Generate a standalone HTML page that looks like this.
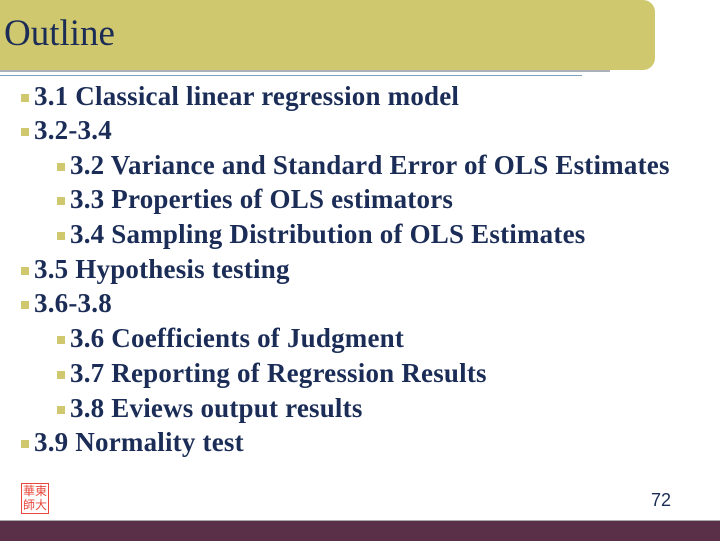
<!DOCTYPE html>
<html><head><style>
body{margin:0;width:720px;height:540px;position:relative;overflow:hidden;background:#fff;font-family:"Liberation Serif",serif;}
.hdr{position:absolute;left:0;top:0;width:655px;height:70px;background:#cfc86e;border-radius:0 12px 12px 0;}
.title{position:absolute;left:4px;top:12px;font-size:37px;color:#1b2d57;}
.l1{position:absolute;left:0;top:70px;width:610px;height:2px;background:#aab0b8;}
.l2{position:absolute;left:0;top:75px;width:582px;height:1px;background:#7fa0b8;}
.it{position:absolute;font-weight:bold;font-size:27px;color:#1b2d57;white-space:nowrap;line-height:28px;letter-spacing:0.2px;}
.it::before{content:"";position:absolute;left:-13px;top:12px;width:8px;height:8px;background:#cfc86e;}
.foot{position:absolute;left:0;top:520px;width:720px;height:20px;background:#5a2f48;border-top:1px solid #aaa;}
.num{position:absolute;left:651px;top:490px;font-family:"Liberation Sans",sans-serif;font-size:18px;color:#1b2d57;}
.seal{position:absolute;left:21px;top:483px;width:26px;height:29px;border:1px solid #e8483c;color:#e8483c;font-size:12px;line-height:14px;text-align:center;font-family:"Noto Sans CJK SC",sans-serif;}
</style></head><body>
<div class="hdr"></div><div class="title">Outline</div>
<div class="l1"></div><div class="l2"></div>
<div class="it" style="left:34px;top:82px">3.1 Classical linear regression model</div>
<div class="it" style="left:34px;top:116px">3.2-3.4</div>
<div class="it" style="left:70px;top:151px">3.2 Variance and Standard Error of OLS Estimates</div>
<div class="it" style="left:70px;top:185px">3.3 Properties of OLS estimators</div>
<div class="it" style="left:70px;top:220px">3.4 Sampling Distribution of OLS Estimates</div>
<div class="it" style="left:34px;top:255px">3.5 Hypothesis testing</div>
<div class="it" style="left:34px;top:289px">3.6-3.8</div>
<div class="it" style="left:70px;top:324px">3.6 Coefficients of Judgment</div>
<div class="it" style="left:70px;top:359px">3.7 Reporting of Regression Results</div>
<div class="it" style="left:70px;top:394px">3.8 Eviews output results</div>
<div class="it" style="left:34px;top:428px">3.9 Normality test</div>
<div class="seal">華東<br>師大</div>
<div class="num">72</div>
<div class="foot"></div>
</body></html>
